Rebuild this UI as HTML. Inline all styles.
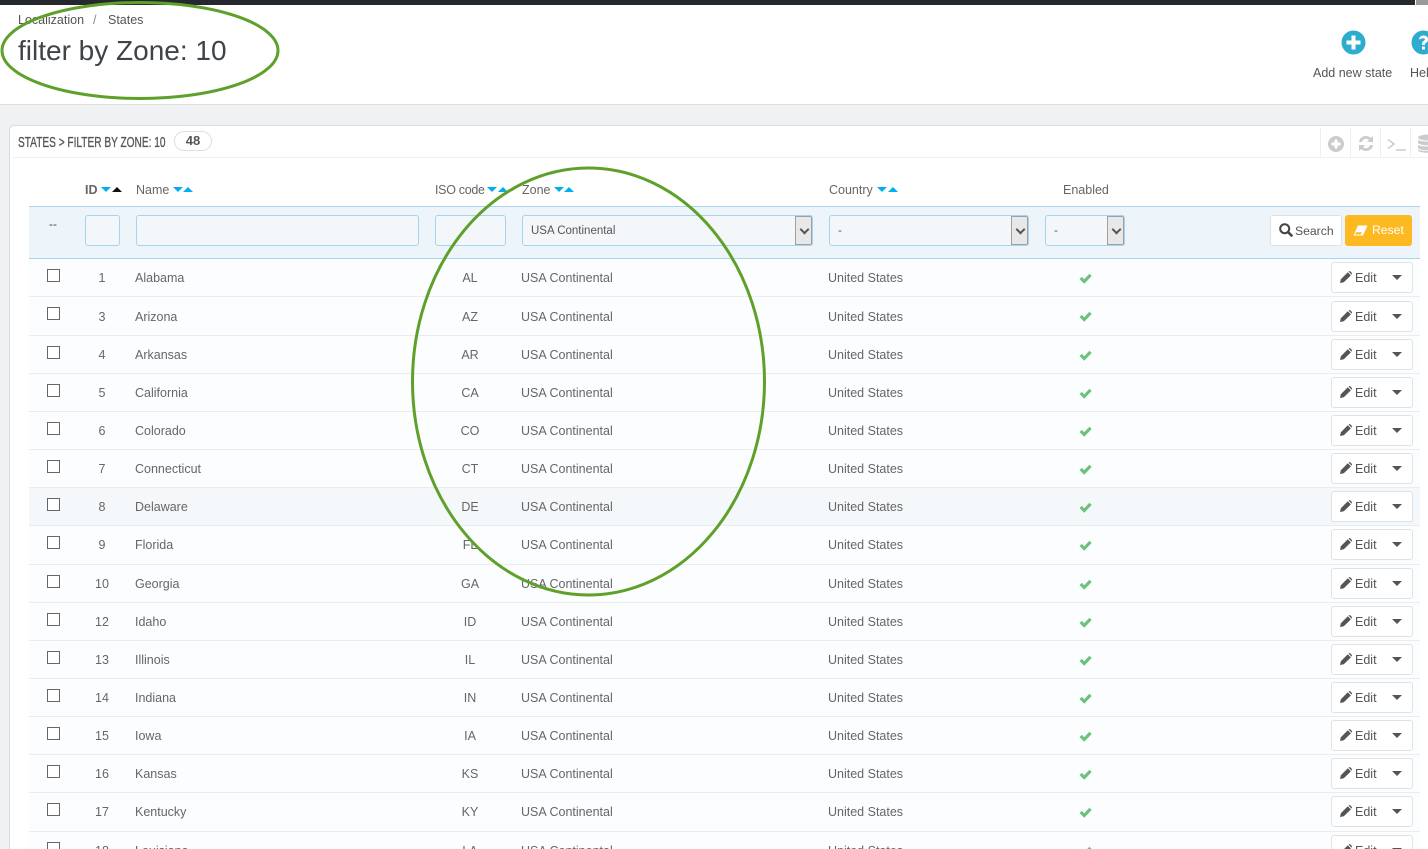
<!DOCTYPE html>
<html lang="en"><head><meta charset="utf-8"><title>States</title>
<style>
*{box-sizing:border-box}
html,body{margin:0;padding:0;width:1428px;height:849px;overflow:hidden}
#w{position:absolute;left:0;top:0;width:1428px;height:849px;overflow:hidden;background:#eff1f2;font-family:"Liberation Sans",sans-serif;font-size:12.5px;color:#666}
.a{position:absolute;white-space:nowrap}
.r{position:absolute;left:29px;width:1391px;background:#fcfdfe;border-bottom:1px solid #eaedef}
.r span{position:absolute;white-space:nowrap;top:50%;margin-top:-8px;line-height:16px}
.r.x span{margin-top:-7px}
.r .c{position:absolute;left:18px;top:50%;margin-top:-9px;width:13px;height:13px;border:1px solid #666;background:#fff}
.r .i{left:44px;width:58px;text-align:center}
.r .n{left:106px}
.r .s{left:411px;width:60px;text-align:center}
.r .z{left:492px}
.r .u{left:799px}
.r svg.k{position:absolute;left:1050px;top:50%;margin-top:-6px;width:13px;height:13px}
.e{position:absolute;left:1302px;top:50%;margin-top:-16px;width:82px;height:31px;border:1px solid #dfe2e4;border-radius:3px;background:#fff;color:#555}
.r.x .e{margin-top:-15px}
.e svg{position:absolute}
.e b{position:absolute;left:23px;top:7px;font-weight:normal;line-height:16px}
.e i{position:absolute;left:60px;top:12px;border-left:5px solid transparent;border-right:5px solid transparent;border-top:5px solid #555}
.h{position:absolute;top:183px;font-size:12.5px;color:#666;line-height:14px;white-space:nowrap}
.t{position:absolute;top:187px;width:0;height:0;border-left:5px solid transparent;border-right:5px solid transparent}
.dn{border-top:5px solid #00aff0}
.up{border-bottom:5px solid #00aff0}
.in{position:absolute;top:215px;height:31px;border:1px solid #a8d3ec;border-radius:3px;background:#f3f7fa;color:#555;font-size:11.5px;line-height:31px;padding-left:8px;white-space:nowrap}
.ar{position:absolute;right:0;top:0;width:17px;height:29px;background:#e8e8e8;border:1px solid #a0a0a0;border-radius:0 2px 2px 0}
.ar:after{content:"";position:absolute;left:5px;top:9px;width:5px;height:5px;border-right:2px solid #555;border-bottom:2px solid #555;transform:rotate(45deg)}
.tb{position:absolute;top:128px;width:1px;height:29px;background:#eceeef}
</style></head><body><div id="w">
<svg width="0" height="0" style="position:absolute"><defs>
<symbol id="ok" viewBox="0 0 12 12"><path d="M0.5 6.500 L2.600 4.500 L4.800 6.700 L9.600 1.600 L11.700 3.700 L4.800 10.800 Z" fill="#6bc27c"/></symbol>
<symbol id="pe" viewBox="0 0 12 12"><path d="M0 12 L0.800 8.300 L7.800 1.300 L10.900 4.400 L3.800 11.300 Z M8.600 .6 L9.200 .1 Q9.700 -.1 10.200 .3 L11.800 1.900 Q12.100 2.400 11.900 2.900 L11.600 3.600 Z" fill="#555"/></symbol>
</defs></svg>

<div class="a" style="left:0;top:0;width:1428px;height:105px;background:#fff;border-bottom:1px solid #dcdee0"></div>
<div class="a" style="left:0;top:0;width:1415px;height:5px;background:#25282e"></div>
<div class="a" style="left:1416px;top:0;width:12px;height:5px;background:#9a9a9a"></div>

<div class="a" style="left:18px;top:12px;line-height:16px;color:#555">Localization</div>
<div class="a" style="left:93px;top:12px;line-height:16px;color:#888">/</div>
<div class="a" style="left:108px;top:12px;line-height:16px;color:#555">States</div>
<div class="a" style="left:18px;top:33px;font-size:28px;line-height:36px;color:#3f444a">filter by Zone: 10</div>

<svg class="a" style="left:1341px;top:30px" width="25" height="25" viewBox="0 0 25 25"><circle cx="12.500" cy="12.500" r="12" fill="#2eacce"/><path d="M10.500 5.500h4v5h5v4h-5v5h-4v-5h-5v-4h5z" fill="#fff"/></svg>
<div class="a" style="left:1313px;top:65px;line-height:16px;color:#555">Add new state</div>
<svg class="a" style="left:1411px;top:30px" width="17" height="25" viewBox="0 0 17 25"><circle cx="12.500" cy="12.500" r="12" fill="#2eacce"/><path d="M8 9.500Q8.500 5.500 12.500 5.500 17 5.500 17 9.500 17 11.800 14.800 13 13.800 13.700 13.800 15H11V14C11 12 12.200 11.200 13.300 10.500 14 10 14 9.500 14 9.300 13.800 8.500 12.500 8.300 11.300 8.300 11 9.500 11 10Z" fill="#fff"/><rect x="11" y="16.500" width="3" height="3" fill="#fff"/></svg>
<div class="a" style="left:1410px;top:65px;line-height:16px;color:#555">Help</div>

<!-- panel -->
<div class="a" style="left:9px;top:125px;width:1440px;height:740px;background:#fff;border:1px solid #d9dcde;border-radius:5px"></div>
<div class="a" style="left:13px;top:157px;width:1415px;height:1px;background:#eff0f1"></div>
<div class="a" style="left:18px;top:134px;font-size:15px;line-height:17px;color:#555;-webkit-text-stroke:.3px #555;transform:scaleX(.675);transform-origin:0 0">STATES &gt; FILTER BY ZONE: 10</div>
<div class="a" style="left:174px;top:131px;width:38px;height:20px;border:1px solid #dcdee0;border-radius:10px;background:#fff;color:#555;font-weight:bold;font-size:13px;line-height:18px;text-align:center">48</div>
<div class="tb" style="left:1320px"></div><div class="tb" style="left:1350px"></div><div class="tb" style="left:1380px"></div><div class="tb" style="left:1410px"></div>
<svg class="a" style="left:1328px;top:136px" width="16" height="16" viewBox="0 0 16 16"><circle cx="8" cy="8" r="8" fill="#c9cbcd"/><path d="M6.500 3.500h3v3h3v3h-3v3h-3v-3h-3v-3h3z" fill="#fff"/></svg>
<svg class="a" style="left:1358px;top:135px" width="16" height="17" viewBox="0 0 16 17"><path d="M1 7C1.500 3 4.500 1 8 1c2 0 3.500.8 4.800 2L15 1v6H9l2-2C10.200 4.200 9.200 3.800 8 3.800 6 3.800 4.500 5 4 7zM15 10c-.5 4-3.500 6-7 6-2 0-3.500-.8-4.800-2L1 16v-6h6l-2 2c.8.800 1.800 1.200 3 1.200 2 0 3.500-1.200 4-3.200z" fill="#c9cbcd"/></svg>
<svg class="a" style="left:1387px;top:138px" width="19" height="13" viewBox="0 0 19 13" fill="none" stroke="#c9cbcd" stroke-width="1.500"><path d="M1 1.500l6 4.500-6 4.500M9 12h10"/></svg>
<svg class="a" style="left:1418px;top:134px" width="10" height="19" viewBox="0 0 10 19"><g fill="#c9cbcd"><ellipse cx="10" cy="3.500" rx="10" ry="3"/><path d="M0 6c2 2 18 2 20 0v3c-2 3-18 3-20 0zM0 11c2 2 18 2 20 0v3c-2 3-18 3-20 0zM0 15.500c2 2 18 2 20 0v1c-2 3-18 3-20 0z"/></g></svg>

<!-- header -->
<div class="h" style="left:85px;font-weight:bold">ID</div>
<div class="t dn" style="left:101px"></div><div class="t" style="left:112px;border-bottom:5px solid #111"></div>
<div class="h" style="left:136px">Name</div>
<div class="t dn" style="left:173px"></div><div class="t up" style="left:183px"></div>
<div class="h" style="left:435px;letter-spacing:-.3px">ISO code</div>
<div class="t dn" style="left:487px"></div><div class="t up" style="left:498px"></div>
<div class="h" style="left:522px">Zone</div>
<div class="t dn" style="left:554px"></div><div class="t up" style="left:564px"></div>
<div class="h" style="left:829px">Country</div>
<div class="t dn" style="left:877px"></div><div class="t up" style="left:888px"></div>
<div class="h" style="left:1063px">Enabled</div>

<!-- filter -->
<div class="a" style="left:29px;top:206px;width:1391px;height:53px;background:#edf5fb;border-top:1px solid #a8d6ef;border-bottom:1px solid #a8d6ef"></div>
<div class="a" style="left:49px;top:217px;font-size:12px;line-height:14px;color:#444">--</div>
<div class="in" style="left:85px;width:35px"></div>
<div class="in" style="left:136px;width:283px"></div>
<div class="in" style="left:435px;width:71px"></div>
<div class="in" style="left:522px;width:291px">USA Continental<div class="ar"></div></div>
<div class="in" style="left:829px;width:200px">-<div class="ar"></div></div>
<div class="in" style="left:1045px;width:80px">-<div class="ar"></div></div>
<div class="a" style="left:1270px;top:215px;width:72px;height:31px;background:#fff;border:1px solid #dfe2e4;border-radius:3px;color:#555;font-size:12.2px;line-height:30px;padding-left:24px">Search</div>
<svg class="a" style="left:1279px;top:223px" width="14" height="14" viewBox="0 0 14 14" fill="none" stroke="#444" stroke-width="2"><circle cx="5.700" cy="5.700" r="4.500"/><path d="M9 9l4.300 4.300" stroke-width="2.500"/></svg>
<div class="a" style="left:1345px;top:215px;width:67px;height:31px;background:#fcb922;border-radius:3px;color:#fff;font-size:12.2px;line-height:31px;padding-left:27px">Reset</div>
<svg class="a" style="left:1353px;top:225px" width="15" height="11" viewBox="0 0 15 11"><path d="M5 .5h9.500L10 10.500H.5z" fill="#fff"/><path d="M3.200 7.200h6L7.500 9.500H1.800z" fill="#fcb922"/></svg>

<!-- rows -->
<div class="r" style="top:259px;height:38px"><div class="c"></div><span class="i">1</span><span class="n">Alabama</span><span class="s">AL</span><span class="z">USA Continental</span><span class="u">United States</span><svg class="k"><use href="#ok"/></svg><div class="e"><svg style="left:8px;top:8px" width="12" height="12"><use href="#pe"/></svg><b>Edit</b><i></i></div></div>
<div class="r x" style="top:297px;height:39px"><div class="c"></div><span class="i">3</span><span class="n">Arizona</span><span class="s">AZ</span><span class="z">USA Continental</span><span class="u">United States</span><svg class="k"><use href="#ok"/></svg><div class="e"><svg style="left:8px;top:8px" width="12" height="12"><use href="#pe"/></svg><b>Edit</b><i></i></div></div>
<div class="r" style="top:336px;height:38px"><div class="c"></div><span class="i">4</span><span class="n">Arkansas</span><span class="s">AR</span><span class="z">USA Continental</span><span class="u">United States</span><svg class="k"><use href="#ok"/></svg><div class="e"><svg style="left:8px;top:8px" width="12" height="12"><use href="#pe"/></svg><b>Edit</b><i></i></div></div>
<div class="r" style="top:374px;height:38px"><div class="c"></div><span class="i">5</span><span class="n">California</span><span class="s">CA</span><span class="z">USA Continental</span><span class="u">United States</span><svg class="k"><use href="#ok"/></svg><div class="e"><svg style="left:8px;top:8px" width="12" height="12"><use href="#pe"/></svg><b>Edit</b><i></i></div></div>
<div class="r" style="top:412px;height:38px"><div class="c"></div><span class="i">6</span><span class="n">Colorado</span><span class="s">CO</span><span class="z">USA Continental</span><span class="u">United States</span><svg class="k"><use href="#ok"/></svg><div class="e"><svg style="left:8px;top:8px" width="12" height="12"><use href="#pe"/></svg><b>Edit</b><i></i></div></div>
<div class="r" style="top:450px;height:38px"><div class="c"></div><span class="i">7</span><span class="n">Connecticut</span><span class="s">CT</span><span class="z">USA Continental</span><span class="u">United States</span><svg class="k"><use href="#ok"/></svg><div class="e"><svg style="left:8px;top:8px" width="12" height="12"><use href="#pe"/></svg><b>Edit</b><i></i></div></div>
<div class="r" style="top:488px;height:38px;background:#f5f8fa"><div class="c"></div><span class="i">8</span><span class="n">Delaware</span><span class="s">DE</span><span class="z">USA Continental</span><span class="u">United States</span><svg class="k"><use href="#ok"/></svg><div class="e"><svg style="left:8px;top:8px" width="12" height="12"><use href="#pe"/></svg><b>Edit</b><i></i></div></div>
<div class="r" style="top:526px;height:39px"><div class="c"></div><span class="i">9</span><span class="n">Florida</span><span class="s">FL</span><span class="z">USA Continental</span><span class="u">United States</span><svg class="k"><use href="#ok"/></svg><div class="e"><svg style="left:8px;top:8px" width="12" height="12"><use href="#pe"/></svg><b>Edit</b><i></i></div></div>
<div class="r" style="top:565px;height:38px"><div class="c"></div><span class="i">10</span><span class="n">Georgia</span><span class="s">GA</span><span class="z">USA Continental</span><span class="u">United States</span><svg class="k"><use href="#ok"/></svg><div class="e"><svg style="left:8px;top:8px" width="12" height="12"><use href="#pe"/></svg><b>Edit</b><i></i></div></div>
<div class="r" style="top:603px;height:38px"><div class="c"></div><span class="i">12</span><span class="n">Idaho</span><span class="s">ID</span><span class="z">USA Continental</span><span class="u">United States</span><svg class="k"><use href="#ok"/></svg><div class="e"><svg style="left:8px;top:8px" width="12" height="12"><use href="#pe"/></svg><b>Edit</b><i></i></div></div>
<div class="r" style="top:641px;height:38px"><div class="c"></div><span class="i">13</span><span class="n">Illinois</span><span class="s">IL</span><span class="z">USA Continental</span><span class="u">United States</span><svg class="k"><use href="#ok"/></svg><div class="e"><svg style="left:8px;top:8px" width="12" height="12"><use href="#pe"/></svg><b>Edit</b><i></i></div></div>
<div class="r" style="top:679px;height:38px"><div class="c"></div><span class="i">14</span><span class="n">Indiana</span><span class="s">IN</span><span class="z">USA Continental</span><span class="u">United States</span><svg class="k"><use href="#ok"/></svg><div class="e"><svg style="left:8px;top:8px" width="12" height="12"><use href="#pe"/></svg><b>Edit</b><i></i></div></div>
<div class="r" style="top:717px;height:38px"><div class="c"></div><span class="i">15</span><span class="n">Iowa</span><span class="s">IA</span><span class="z">USA Continental</span><span class="u">United States</span><svg class="k"><use href="#ok"/></svg><div class="e"><svg style="left:8px;top:8px" width="12" height="12"><use href="#pe"/></svg><b>Edit</b><i></i></div></div>
<div class="r" style="top:755px;height:38px"><div class="c"></div><span class="i">16</span><span class="n">Kansas</span><span class="s">KS</span><span class="z">USA Continental</span><span class="u">United States</span><svg class="k"><use href="#ok"/></svg><div class="e"><svg style="left:8px;top:8px" width="12" height="12"><use href="#pe"/></svg><b>Edit</b><i></i></div></div>
<div class="r" style="top:793px;height:39px"><div class="c"></div><span class="i">17</span><span class="n">Kentucky</span><span class="s">KY</span><span class="z">USA Continental</span><span class="u">United States</span><svg class="k"><use href="#ok"/></svg><div class="e"><svg style="left:8px;top:8px" width="12" height="12"><use href="#pe"/></svg><b>Edit</b><i></i></div></div>
<div class="r" style="top:832px;height:38px"><div class="c"></div><span class="i">18</span><span class="n">Louisiana</span><span class="s">LA</span><span class="z">USA Continental</span><span class="u">United States</span><svg class="k"><use href="#ok"/></svg><div class="e"><svg style="left:8px;top:8px" width="12" height="12"><use href="#pe"/></svg><b>Edit</b><i></i></div></div>

<!-- annotations -->
<svg class="a" style="left:0;top:0;pointer-events:none" width="1428" height="849"><ellipse cx="140" cy="50.500" rx="138" ry="48" fill="none" stroke="#5fa02a" stroke-width="3"/><ellipse cx="588.500" cy="381.500" rx="176" ry="213.500" fill="none" stroke="#5fa02a" stroke-width="3"/></svg>
</div></body></html>
